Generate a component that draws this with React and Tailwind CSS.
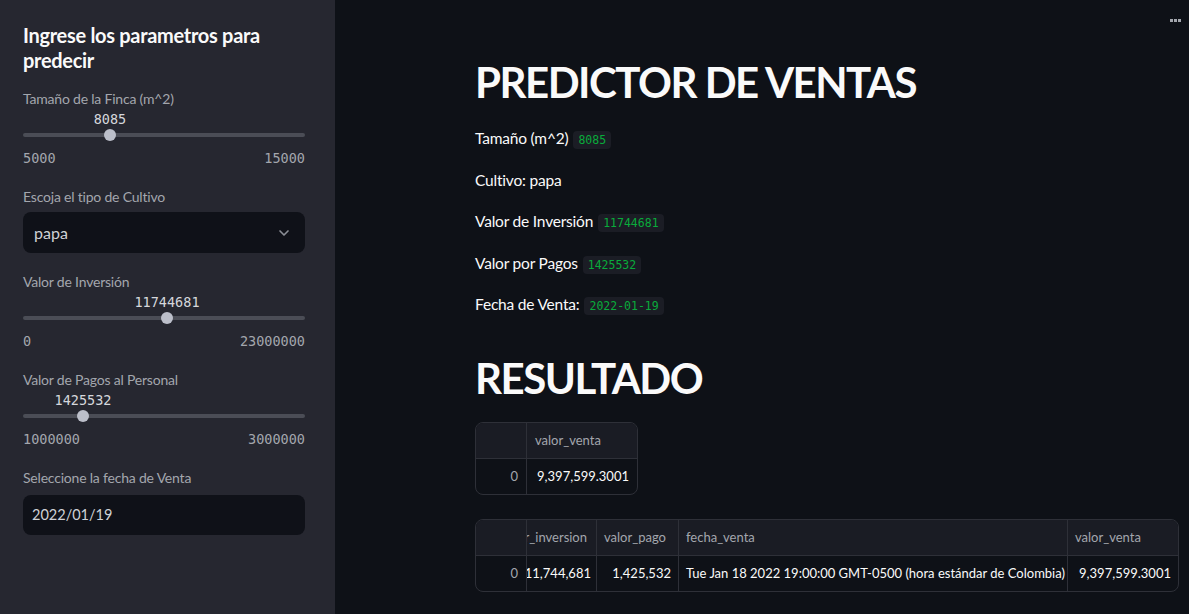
import React from 'react';
import { ChevronDown } from 'lucide-react';

const sans = { fontFamily: 'Lato, "Noto Sans", sans-serif' };

function Slider({ label, value, min, max }) {
  const pct = ((value - min) / (max - min)) * 100;
  return (
    <div>
      <div className="h-[20px] text-[14px] leading-[20px] tracking-[-0.2px] text-[#a3a6ad]">{label}</div>
      <div className="relative h-[18px] mt-[1px]">
        <span className="absolute top-0 -translate-x-1/2 font-['DejaVu_Sans_Mono',monospace] text-[13.5px] leading-[18px] text-[#d5d7dc]" style={{ left: `${pct}%` }}>{value}</span>
      </div>
      <div className="relative h-[14px] flex items-center">
        <div className="w-full h-[4px] rounded-full bg-[#4b4d56]" />
        <div className="absolute w-[12px] h-[12px] rounded-full bg-[#bcbfca] -translate-x-1/2" style={{ left: `${pct}%` }} />
      </div>
      <div className="mt-[7px] flex justify-between font-['DejaVu_Sans_Mono',monospace] text-[13.5px] leading-[18px] text-[#a3a6ad]">
        <span>{min}</span>
        <span>{max}</span>
      </div>
    </div>
  );
}

function Code({ children }) {
  return <code className="ml-[5px] px-[5px] py-[2px] rounded bg-[#1b1d25] text-[#09ab3b] font-['DejaVu_Sans_Mono',monospace] text-[11.5px] tracking-normal">{children}</code>;
}

export default function App() {
  return (
    <div className="flex w-[1189px] h-[614px] overflow-hidden bg-[#0e1117] text-[#fafafa]" style={sans}>
      {/* sidebar */}
      <aside className="w-[335px] shrink-0 h-full bg-[#262730] px-[23px] pt-[23px]">
        <h2 className="text-[20px] leading-[25px] font-bold text-[#fafafa] tracking-[-0.3px]">Ingrese los parametros para predecir</h2>
        <div className="mt-[16px] w-[282px]">
          <Slider label="Tamaño de la Finca (m^2)" value={8085} min={5000} max={15000} />
          <div className="mt-[20px] h-[20px] text-[14px] leading-[20px] tracking-[-0.2px] text-[#a3a6ad]">Escoja el tipo de Cultivo</div>
          <div className="mt-[5px] h-[41px] rounded-lg bg-[#0f1118] flex items-center justify-between pl-[11px] pr-[13px]">
            <span className="text-[16px] text-[#cfd1d6]">papa</span>
            <ChevronDown size={16} strokeWidth={2.5} className="text-[#8b8e96]" />
          </div>
          <div className="mt-[19px]">
            <Slider label="Valor de Inversión" value={11744681} min={0} max={23000000} />
          </div>
          <div className="mt-[20px]">
            <Slider label="Valor de Pagos al Personal" value={1425532} min={1000000} max={3000000} />
          </div>
          <div className="mt-[20px] h-[20px] text-[14px] leading-[20px] tracking-[-0.2px] text-[#a3a6ad]">Seleccione la fecha de Venta</div>
          <div className="mt-[7px] h-[40px] rounded-lg bg-[#0f1118] flex items-center pl-[9px]">
            <span className="text-[14.5px] text-[#cfd1d6]">2022/01/19</span>
          </div>
        </div>
      </aside>

      {/* main */}
      <main className="relative flex-1 h-full pl-[140px] pt-[56px]">
        <div className="absolute top-[19px] right-[8px] flex gap-[1px]">
          <div className="w-[3px] h-[3px] bg-[#a3a6ad]" />
          <div className="w-[3px] h-[3px] bg-[#a3a6ad]" />
          <div className="w-[3px] h-[3px] bg-[#a3a6ad]" />
        </div>
        <h1 className="text-[42px] leading-[53px] font-bold tracking-[-1.5px]">PREDICTOR DE VENTAS</h1>
        <div className="mt-[17px] text-[15.5px] leading-[24px] tracking-[-0.2px]">
          <div className="h-[41.5px]">Tamaño (m^2)<Code>8085</Code></div>
          <div className="h-[41.5px]">Cultivo: papa</div>
          <div className="h-[41.5px]">Valor de Inversión<Code>11744681</Code></div>
          <div className="h-[41.5px]">Valor por Pagos<Code>1425532</Code></div>
          <div className="h-[41.5px]">Fecha de Venta:<Code>2022-01-19</Code></div>
        </div>
        <h1 className="mt-[18px] text-[42px] leading-[53px] font-bold tracking-[-1.5px]">RESULTADO</h1>

        <div className="mt-[17.5px] w-[163px] rounded-lg border border-[#2e3038] overflow-hidden text-[13px]">
          <div className="flex h-[36px] bg-[#1a1c24] border-b border-[#2e3038]">
            <div className="w-[51px] border-r border-[#2e3038]" />
            <div className="flex-1 flex items-center px-[8px] text-[#a3a6ad]">valor_venta</div>
          </div>
          <div className="flex h-[35px]">
            <div className="w-[51px] border-r border-[#2e3038] flex items-center justify-end pr-[8px] text-[#a3a6ad]">0</div>
            <div className="flex-1 flex items-center justify-end px-[8px]">9,397,599.3001</div>
          </div>
        </div>

        <div className="mt-[24px] w-[704px] rounded-lg border border-[#2e3038] overflow-hidden text-[13px]">
          <div className="flex h-[36px] bg-[#1a1c24] border-b border-[#2e3038] text-[#a3a6ad]">
            <div className="w-[51px] shrink-0 border-r border-[#2e3038]" />
            <div className="w-[70px] shrink-0 border-r border-[#2e3038] flex items-center justify-end overflow-hidden pr-[9px] whitespace-nowrap">
              <span className="shrink-0">valor_inversion</span>
            </div>
            <div className="w-[82px] shrink-0 border-r border-[#2e3038] flex items-center px-[7px]">valor_pago</div>
            <div className="w-[389px] shrink-0 border-r border-[#2e3038] flex items-center px-[7px]">fecha_venta</div>
            <div className="flex-1 flex items-center px-[7px]">valor_venta</div>
          </div>
          <div className="flex h-[35px]">
            <div className="w-[51px] shrink-0 border-r border-[#2e3038] flex items-center justify-end pr-[8px] text-[#a3a6ad]">0</div>
            <div className="w-[70px] shrink-0 border-r border-[#2e3038] flex items-center justify-end overflow-hidden pr-[5px] whitespace-nowrap">11,744,681</div>
            <div className="w-[82px] shrink-0 border-r border-[#2e3038] flex items-center justify-end px-[7px]">1,425,532</div>
            <div className="w-[389px] shrink-0 border-r border-[#2e3038] flex items-center px-[7px] whitespace-nowrap">Tue Jan 18 2022 19:00:00 GMT-0500 (hora estándar de Colombia)</div>
            <div className="flex-1 flex items-center justify-end px-[7px]">9,397,599.3001</div>
          </div>
        </div>
      </main>
    </div>
  );
}
